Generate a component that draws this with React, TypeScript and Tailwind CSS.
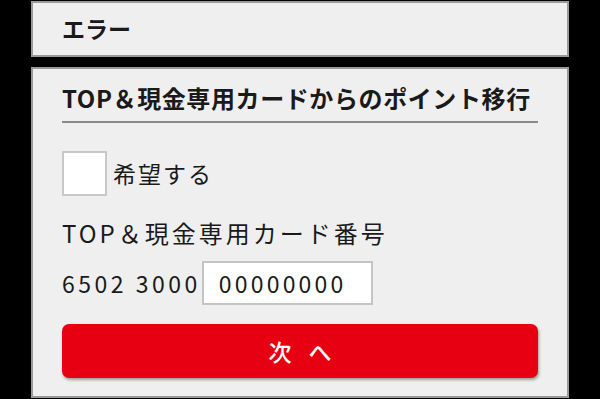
export default function App() {
  return (
    <div
      className="flex h-[399px] w-[600px] flex-col overflow-hidden bg-black text-[#1a1a1a]"
      style={{ fontFamily: '"Noto Sans CJK JP", "Noto Sans", sans-serif' }}
    >
      <div className="mx-[31px] mt-[1px] flex h-[56px] items-center border-2 border-[#9a9a9a] bg-[#efefef] pl-[29px]">
        <h1 className="pb-[2px] text-[23px] font-bold leading-none">エラー</h1>
      </div>

      <div className="mx-[31px] mt-[10px] flex h-[331px] flex-col border-2 border-[#9a9a9a] bg-[#efefef] px-[29px] pt-[14px]">
        <h2 className="border-b-2 border-[#8a8a8a] pb-[8px] text-[24px] font-bold leading-[30px] tracking-[0.6px]">
          TOP＆現金専用カードからのポイント移行
        </h2>

        <label className="mt-[28px] flex items-center gap-[6px]">
          <span className="h-[45px] w-[45px] border-2 border-[#c8c8c8] bg-white" />
          <span className="text-[23px] leading-none tracking-[2px]">希望する</span>
        </label>

        <p className="mt-[23px] text-[24px] leading-[28px] tracking-[3px]">
          TOP＆現金専用カード番号
        </p>

        <div className="mt-[14px] flex items-center">
          <span className="text-[23px] leading-none tracking-[3.5px]">6502 3000</span>
          <div className="ml-[1px] flex h-[44px] w-[171px] items-center border-2 border-[#c4c4c4] bg-white pl-[15px] text-[23px] tracking-[3.2px]">
            00000000
          </div>
        </div>

        <button
          type="button"
          className="mt-[19px] flex h-[54px] items-center justify-center rounded-[7px] bg-[#e60012] pl-[6px] text-[23px] font-medium tracking-[6px] text-white shadow-[1px_2px_3px_rgba(0,0,0,0.35)]"
        >
          次 へ
        </button>
      </div>
    </div>
  );
}
